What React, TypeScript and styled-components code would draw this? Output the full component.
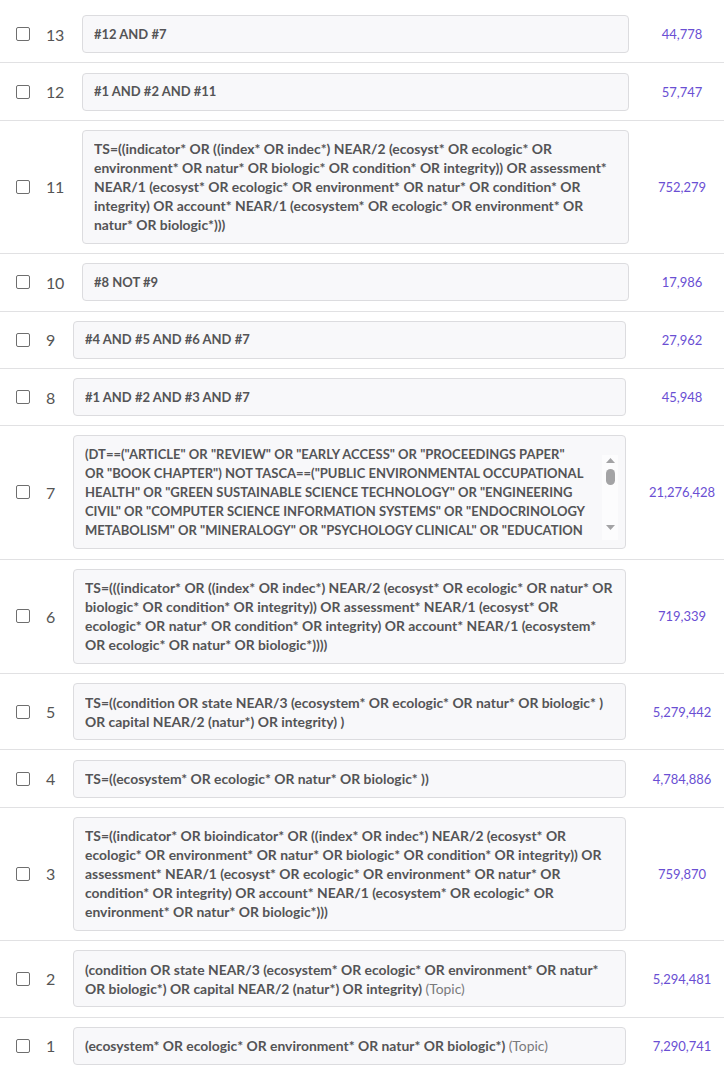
import React from "react";
import styled, { createGlobalStyle } from "styled-components";

const Global = createGlobalStyle`
  html, body { margin: 0; padding: 0; background: #ffffff; }
  body { font-family: Lato, "Noto Sans", sans-serif; }
`;

const Page = styled.div`
  padding-top: 6px;
  width: 724px;
`;

const Row = styled.div<{ $last?: boolean }>`
  display: flex;
  align-items: center;
  padding: 9.2px 0;
  border-bottom: ${(p) => (p.$last ? "none" : "1px solid #e1e1e3")};
`;

const Check = styled.input.attrs({ type: "checkbox" })`
  appearance: none;
  -webkit-appearance: none;
  margin: 0 0 0 16px;
  width: 14px;
  height: 14px;
  border: 1px solid #6e6e6e;
  border-radius: 2px;
  background: #fff;
  flex: none;
`;

const Num = styled.span`
  margin-left: 16px;
  font-family: Lato, sans-serif;
  font-size: 16px;
  color: #555;
  flex: none;
  letter-spacing: -0.3px;
`;

const Box = styled.div<{ $wide?: boolean; $caps?: boolean }>`
  flex: 1;
  min-width: 0;
  margin-left: 18px;
  margin-right: ${(p) => (p.$wide ? "11px" : "14px")};
  background: #f8f8fa;
  border: 1px solid #dcdcdf;
  border-radius: 4px;
  padding: 8.5px 11px;
  display: flex;
  font-family: Lato, sans-serif;
  font-weight: 700;
  font-size: ${(p) => (p.$caps ? "13px" : "13.9px")};
  line-height: 19px;
  color: #545456;
`;

const Lines = styled.div<{ $clip?: number }>`
  flex: 1;
  min-width: 0;
  overflow: hidden;
  max-height: ${(p) => (p.$clip ? `${p.$clip * 19}px` : "none")};
`;

const Line = styled.div`
  white-space: nowrap;
`;

const Topic = styled.span`
  font-weight: 400;
  color: #7a7a7c;
`;

const Count = styled.span`
  width: 84px;
  flex: none;
  text-align: center;
  font-family: Lato, sans-serif;
  font-size: 13px;
  color: #6a4fd3;
`;

const Track = styled.div`
  flex: none;
  width: 16px;
  align-self: stretch;
  margin: 10px -4px 0 14px;
  background: #fcfcfd;
  display: flex;
  flex-direction: column;
  align-items: center;
  padding: 3px 0 10px;
`;

const Thumb = styled.div`
  width: 9px;
  height: 16px;
  border-radius: 4.5px;
  background: #a3a3a5;
  margin-top: 6px;
`;

const Spacer = styled.div`
  flex: 1;
`;

const Arrow = ({ down }: { down?: boolean }) => (
  <svg width="9" height="5" viewBox="0 0 9 5">
    <path d={down ? "M0 0 H9 L4.5 5 Z" : "M0 5 H9 L4.5 0 Z"} fill="#a3a3a5" />
  </svg>
);

type Item = {
  n: number;
  lines: string[];
  count: string;
  topic?: boolean;
  clip?: number;
  caps?: boolean;
};

const items: Item[] = [
  { n: 13, lines: ["#12 AND #7"], count: "44,778", caps: true },
  { n: 12, lines: ["#1 AND #2 AND #11"], count: "57,747", caps: true },
  {
    n: 11,
    lines: [
      "TS=((indicator* OR ((index* OR indec*) NEAR/2 (ecosyst* OR ecologic* OR",
      "environment* OR natur* OR biologic* OR condition* OR integrity)) OR assessment*",
      "NEAR/1 (ecosyst* OR ecologic* OR environment* OR natur* OR condition* OR",
      "integrity) OR account* NEAR/1 (ecosystem* OR ecologic* OR environment* OR",
      "natur* OR biologic*)))",
    ],
    count: "752,279",
  },
  { n: 10, lines: ["#8 NOT #9"], count: "17,986", caps: true },
  { n: 9, lines: ["#4 AND #5 AND #6 AND #7"], count: "27,962", caps: true },
  { n: 8, lines: ["#1 AND #2 AND #3 AND #7"], count: "45,948", caps: true },
  {
    n: 7,
    lines: [
      '(DT==("ARTICLE" OR "REVIEW" OR "EARLY ACCESS" OR "PROCEEDINGS PAPER"',
      'OR "BOOK CHAPTER") NOT TASCA==("PUBLIC ENVIRONMENTAL OCCUPATIONAL',
      'HEALTH" OR "GREEN SUSTAINABLE SCIENCE TECHNOLOGY" OR "ENGINEERING',
      'CIVIL" OR "COMPUTER SCIENCE INFORMATION SYSTEMS" OR "ENDOCRINOLOGY',
      'METABOLISM" OR "MINERALOGY" OR "PSYCHOLOGY CLINICAL" OR "EDUCATION',
    ],
    count: "21,276,428",
    clip: 5,
    caps: true,
  },
  {
    n: 6,
    lines: [
      "TS=(((indicator* OR ((index* OR indec*) NEAR/2 (ecosyst* OR ecologic* OR natur* OR",
      "biologic* OR condition* OR integrity)) OR assessment* NEAR/1 (ecosyst* OR",
      "ecologic* OR natur* OR condition* OR integrity) OR account* NEAR/1 (ecosystem*",
      "OR ecologic* OR natur* OR biologic*))))",
    ],
    count: "719,339",
  },
  {
    n: 5,
    lines: [
      "TS=((condition OR state NEAR/3 (ecosystem* OR ecologic* OR natur* OR biologic* )",
      "OR capital NEAR/2 (natur*) OR integrity) )",
    ],
    count: "5,279,442",
  },
  { n: 4, lines: ["TS=((ecosystem* OR ecologic* OR natur* OR biologic* ))"], count: "4,784,886" },
  {
    n: 3,
    lines: [
      "TS=((indicator* OR bioindicator* OR ((index* OR indec*) NEAR/2 (ecosyst* OR",
      "ecologic* OR environment* OR natur* OR biologic* OR condition* OR integrity)) OR",
      "assessment* NEAR/1 (ecosyst* OR ecologic* OR environment* OR natur* OR",
      "condition* OR integrity) OR account* NEAR/1 (ecosystem* OR ecologic* OR",
      "environment* OR natur* OR biologic*)))",
    ],
    count: "759,870",
  },
  {
    n: 2,
    lines: [
      "(condition OR state NEAR/3 (ecosystem* OR ecologic* OR environment* OR natur*",
      "OR biologic*) OR capital NEAR/2 (natur*) OR integrity)",
    ],
    count: "5,294,481",
    topic: true,
  },
  {
    n: 1,
    lines: ["(ecosystem* OR ecologic* OR environment* OR natur* OR biologic*)"],
    count: "7,290,741",
    topic: true,
  },
];

export default function App() {
  return (
    <>
      <Global />
      <Page>
        {items.map((it, i) => {
          const wide = it.n >= 10;
          return (
            <Row key={it.n} $last={i === items.length - 1}>
              <Check aria-label={`Select set ${it.n}`} />
              <Num>{it.n}</Num>
              <Box $wide={wide} $caps={it.caps}>
                <Lines $clip={it.clip}>
                  {it.lines.map((l, j) => (
                    <Line key={j}>
                      {l}
                      {it.topic && j === it.lines.length - 1 && (
                        <>
                          {" "}
                          <Topic>(Topic)</Topic>
                        </>
                      )}
                    </Line>
                  ))}
                </Lines>
                {it.clip && (
                  <Track>
                    <Arrow />
                    <Thumb />
                    <Spacer />
                    <Arrow down />
                  </Track>
                )}
              </Box>
              <Count>{it.count}</Count>
            </Row>
          );
        })}
      </Page>
    </>
  );
}
